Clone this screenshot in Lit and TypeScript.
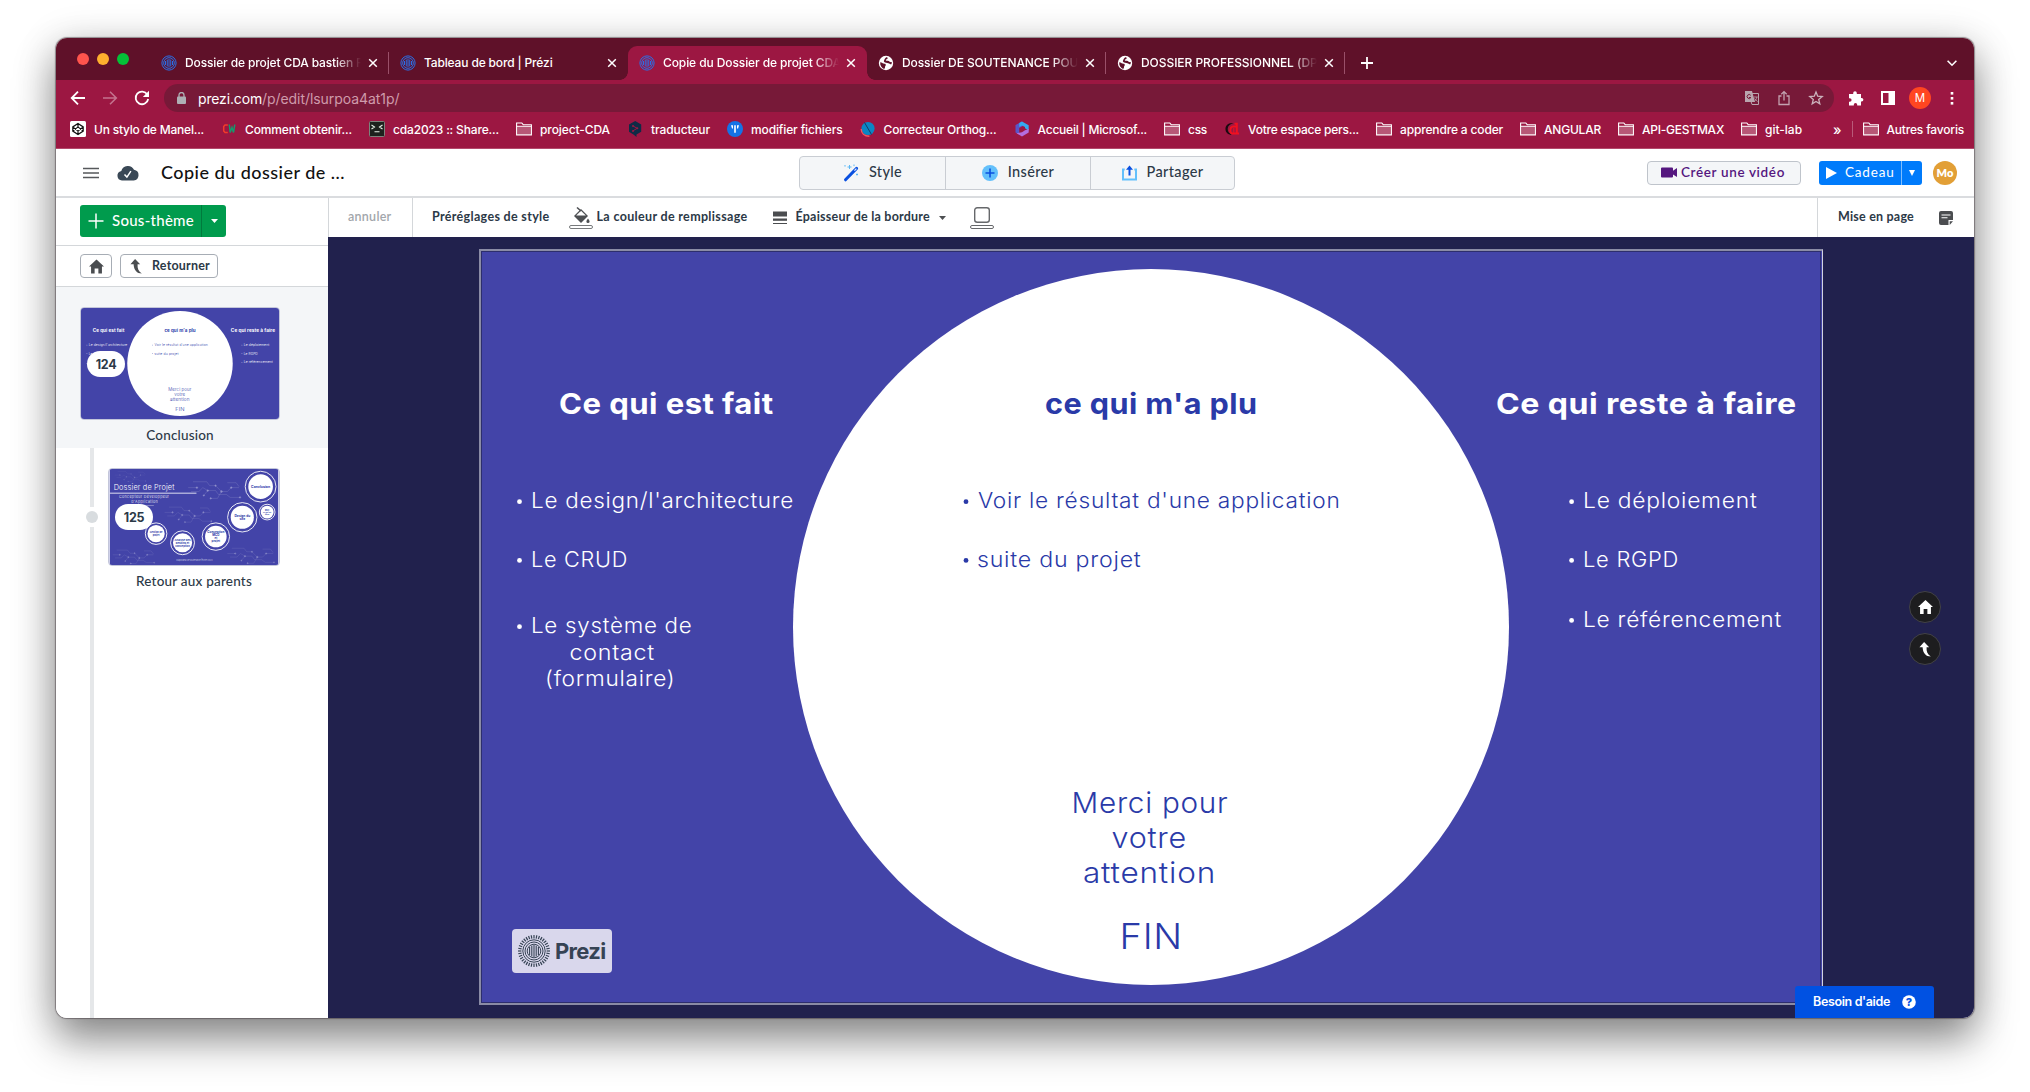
import { LitElement, html, svg, css } from "lit";
import { customElement, property } from "lit/decorators.js";

/** Label whose tracking is adjusted so that it takes up a given width. */
@customElement("fit-text")
class FitText extends LitElement {
  @property({ type: Number }) w = 0;
  @property() text = "";
  static styles = css`
    :host { display: inline-block; white-space: pre; flex: none; }
  `;
  firstUpdated() {
    const el = this.renderRoot.querySelector("span")!;
    const natural = el.getBoundingClientRect().width;
    el.style.letterSpacing = `${(this.w - natural) / this.text.length}px`;
  }
  render() {
    return html`<span>${this.text}</span>`;
  }
}

const fit = (text: string, w: number) => html`<fit-text .text=${text} .w=${w}></fit-text>`;

const preziIcon = html`<svg class="fav" width="16" height="16" viewBox="0 0 16 16" fill="none" stroke="#2a6fe6">
  <circle cx="8" cy="8" r="7.1" stroke-width="1"/><circle cx="8" cy="8" r="5.3" stroke-width="1"/>
  <path d="M4.500 6v4M6.250 4.600v6.800M8 4v8M9.750 4.600v6.800M11.500 6v4" stroke-width="1"/></svg>`;

const globeIcon = html`<svg class="fav" width="16" height="16" viewBox="0 0 16 16">
  <circle cx="8" cy="8" r="7.2" fill="#fff"/>
  <path d="M2.2 7.2c1.8 0 2 .9 3.3 1.3 1.3.3 2.3.2 2.3 1.4 0 1-.9 1.2-.8 2.2.1.8-.2 1.5-.9 1.8-2.300-.8-4.200-3.200-3.900-6.700zM8.300 2.300c1 0 1.500.4 1.300 1.100-.2.800-1.600.5-1.800 1.500-.1.700 1 .800 2.200.900 1.300.2 1.300 1.200 2.400 1.300.8.100 1.200-.1 1.400 0 0 1-.1 1.600-.4 2.200-1.500.1-1.900-.9-3.100-1.100-1.400-.3-3.100-.2-4-1.200-.8-1-.3-1.700.2-2.600.5-.8.9-1.600 1.800-2.100z" fill="#5f1129"/></svg>`;

const closeIcon = html`<svg width="10" height="10" viewBox="0 0 10 10"><path d="M1.200 1.200l7.600 7.600M8.800 1.200l-7.600 7.600" stroke="#fff" stroke-width="1.500"/></svg>`;

const folderIcon = html`<svg width="16" height="16" viewBox="0 0 16 16">
  <path d="M.6 2h5.200l1.400 1.700h8.200v10.200H.6z" fill="none" stroke="#fff" stroke-width="1.100"/>
  <path d="M1.200 5.500h13.600v7.900H1.200z" fill="#fff" fill-opacity=".28"/><path d="M.8 5.300h14.400" stroke="#fff"/></svg>`;

const icons: Record<string, unknown> = {
  folder: folderIcon,
  codepen: html`<svg width="16" height="16" viewBox="0 0 16 16"><rect width="16" height="16" rx="1.500" fill="#fff"/>
    <path d="M8 2.500l5.200 3.400v4.200L8 13.500 2.800 10.100V5.900zM8 2.500v3.400M8 10.100v3.400M2.800 5.900L8 10.100l5.200-4.200M2.800 10.100L8 5.900l5.200 4.200" fill="none" stroke="#111" stroke-width="1.200"/></svg>`,
  cw: html`<svg width="16" height="16" viewBox="0 0 16 16" fill="none" stroke-width="1.500"><path d="M6.800 4H4L2.700 5.500v4.500L4 11.500h2.800" stroke="#f23b2a"/><path d="M8.300 3.500l.9 8L11 6.500l1.500 5L13.800 3.500" stroke="#159a6d"/></svg>`,
  cda: html`<svg width="16" height="16" viewBox="0 0 16 16"><rect x=".5" y=".5" width="15" height="15" rx="1" fill="#1d211d" stroke="#7c837c"/>
    <path d="M2.500 4l3 2-3 2M13.500 4l-3 2 3 2M5.500 10.800h5" fill="none" stroke="#e8f0e8" stroke-width="1.100"/></svg>`,
  deepl: html`<svg width="16" height="16" viewBox="0 0 16 16"><path d="M8.200 0l6 3.400v7.400L9.500 13.500V16l-2.700-2.200L2 10.800V3.400z" fill="#0f2b46"/>
    <path d="M6 5l4.200 2.300L6 9.800" fill="none" stroke="#9c1742"/><circle cx="6" cy="4.900" r="1" fill="#9c1742"/><circle cx="10.300" cy="7.300" r="1" fill="#9c1742"/><circle cx="6" cy="9.900" r="1" fill="#9c1742"/></svg>`,
  pdf: html`<svg width="16" height="16" viewBox="0 0 16 16"><circle cx="8" cy="8" r="8" fill="#1473e6"/><path d="M4 4.300h2v3.200H5zM7.200 4.300h1.600v7.400H7.200zM10 4.300h2l-.9 3.200H10z" fill="#fff"/></svg>`,
  correct: html`<svg width="16" height="16" viewBox="0 0 16 16"><circle cx="8" cy="7.500" r="6.600" fill="#0a86c4"/><path d="M4.500 1.500l7 12" stroke="#143a66"/>
    <path d="M1.200 8c0 4.200 3.200 7.200 8.200 7.200" fill="none" stroke="#f2555f" stroke-width="1.400"/></svg>`,
  ms: html`<svg width="16" height="16" viewBox="0 0 16 16"><path d="M8 .5L1.500 4v7.500l3.700 2V7l5.300-3z" fill="#5a55c8"/><path d="M8 .5l6.700 3.700v5.300L11 7.300V6L8 4.500 5.200 6V2z" fill="#35a9ee"/>
    <path d="M14.700 8v3.500L8 15.500l-5.500-3.200L8 11.200l3-1.900z" fill="#b46fe0"/></svg>`,
  ca: html`<svg width="16" height="16" viewBox="0 0 16 16" fill="none"><path d="M9.500 2C4 1.300 1.200 4.500 1.500 8.500c.3 3.500 3 5.500 6.500 5.200C5 12.500 3.600 10.500 3.700 7.800 3.800 5 6 3 9.500 2z" fill="#1a0a10"/>
    <path d="M8.500 5.500C5.800 6.500 5.500 11.500 8 12.500h7M10.500 2.800h2.300v9.500M8.500 5.500h4" stroke="#f01020" stroke-width="2"/><path d="M9.800 7v5" stroke="#f01020" stroke-width="1"/></svg>`,
};

const bookmarks: [string, string, number][] = [
  ["codepen", "Un stylo de Manel...", 110], ["cw", "Comment obtenir...", 107], ["cda", "cda2023 :: Share...", 106],
  ["folder", "project-CDA", 70], ["deepl", "traducteur", 59], ["pdf", "modifier fichiers", 91.500],
  ["correct", "Correcteur Orthog...", 113], ["ms", "Accueil | Microsof...", 109.500], ["folder", "css", 19],
  ["ca", "Votre espace pers...", 111], ["folder", "apprendre a coder", 103], ["folder", "ANGULAR", 57],
  ["folder", "API-GESTMAX", 82], ["folder", "git-lab", 37],
];

const tabs: { title: string; w: number; icon: unknown; active?: boolean; fade?: boolean; sep?: boolean }[] = [
  { title: "Dossier de projet CDA bastien F", w: 178, icon: preziIcon, fade: true, sep: true },
  { title: "Tableau de bord | Prézi", w: 128.500, icon: preziIcon },
  { title: "Copie du Dossier de projet CDA", w: 178, icon: preziIcon, fade: true, active: true },
  { title: "Dossier DE SOUTENANCE POUR", w: 184, icon: globeIcon, fade: true, sep: true },
  { title: "DOSSIER PROFESSIONNEL (DP)", w: 181, icon: globeIcon, fade: true, sep: true },
];

interface Run { t: string; x: number; x2: number; y: number; s: number; blue?: boolean; bold?: boolean; dot?: number }

const runs: Run[] = [
  { t: "Ce qui est fait", x: 559, x2: 773.500, y: 413.700, s: 29, bold: true },
  { t: "Le design/l'architecture", x: 531, x2: 794, y: 508.300, s: 21.500, dot: 519.500 },
  { t: "Le CRUD", x: 531, x2: 628, y: 567, s: 21.500, dot: 519.500 },
  { t: "Le système de", x: 531, x2: 692.500, y: 633.300, s: 21.500, dot: 519.500 },
  { t: "contact", x: 569.500, x2: 655, y: 659.700, s: 21.500 },
  { t: "(formulaire)", x: 545, x2: 675.500, y: 686.300, s: 21.500 },
  { t: "ce qui m'a plu", x: 1045, x2: 1257.500, y: 413.700, s: 29, bold: true, blue: true },
  { t: "Voir le résultat d'une application", x: 978, x2: 1340.500, y: 508.300, s: 21.500, blue: true, dot: 966 },
  { t: "suite du projet", x: 977, x2: 1141.500, y: 567, s: 21.500, blue: true, dot: 966 },
  { t: "Ce qui reste à faire", x: 1496, x2: 1796.500, y: 414.300, s: 29, bold: true },
  { t: "Le déploiement", x: 1583, x2: 1757.500, y: 508.300, s: 21.500, dot: 1571.600 },
  { t: "Le RGPD", x: 1583, x2: 1679, y: 567, s: 21.500, dot: 1571.600 },
  { t: "Le référencement", x: 1583, x2: 1782, y: 627, s: 21.500, dot: 1571.600 },
  { t: "Merci pour", x: 1071.500, x2: 1228.500, y: 813, s: 28.500, blue: true },
  { t: "votre", x: 1111.500, x2: 1187, y: 848, s: 28.500, blue: true },
  { t: "attention", x: 1083, x2: 1216, y: 883, s: 28.500, blue: true },
  { t: "FIN", x: 1119.500, x2: 1183, y: 948.700, s: 35, blue: true },
];

const slide = (cls: string) => html`<svg class=${cls} viewBox="479 249 1344 756" preserveAspectRatio="none">
  <rect x="479" y="249" width="1344" height="756" fill="#4344a8"/>
  <circle cx="1151" cy="627" r="358" fill="#fff"/>
  ${runs.map((r) => svg`<g fill=${r.blue ? "#2a3aa8" : "#fff"}>
    ${r.dot ? svg`<circle cx=${r.dot} cy=${r.y - 6.600} r="2.400"/>` : ""}
    <text x=${r.x} y=${r.y} textLength=${r.x2 - r.x} lengthAdjust="spacingAndGlyphs" letter-spacing=${r.bold ? 0.4 : 0.7} font-size=${r.s} font-weight=${r.bold ? 700 : 300}>${r.t}</text></g>`)}
</svg>`;

const bubbles: { x: number; y: number; R: number; r: number; lines: string[] }[] = [
  { x: 154, y: 18, R: 15.700, r: 12.600, lines: ["Conclusion"] },
  { x: 160.700, y: 44, R: 8, r: 6.600, lines: ["MVC", "ce qu'est", "donc"] },
  { x: 135.300, y: 49.300, R: 15, r: 11.800, lines: ["Design du", "site"] },
  { x: 108.300, y: 69, R: 14, r: 11, lines: ["Conception", "MCD", "et", "projet"] },
  { x: 74.300, y: 75.300, R: 12.200, r: 9.800, lines: ["Analyse des", "besoins et", "conception"] },
  { x: 47.300, y: 66, R: 11, r: 8.800, lines: ["Gestion de", "projet"] },
];

const circuit = (x: number, y: number, s: number, o: number) => svg`<g transform="translate(${x} ${y}) scale(${s})" stroke="#fff" stroke-opacity=${o} fill="#fff" fill-opacity=${o} stroke-width=".4">
  <path d="M0 7h9M3 11h8l4-4M5 1h14l3 4h6M15 7l5 3h8l3 4M20 10l-4 5M28 5l6 6h6l4-4h8M31 14h8l4 3h10M34 11l-4 7h-7M40 2h9l3 4" fill="none"/>
  <circle cx="9" cy="7" r=".9"/><circle cx="20" cy="10" r=".9"/><circle cx="16" cy="15" r=".8"/><circle cx="34" cy="11" r="1"/><circle cx="23" cy="18" r=".8"/><circle cx="44" cy="7" r=".9"/><circle cx="53" cy="17" r=".8"/><circle cx="28" cy="5" r=".8"/></g>`;

const homeShape = svg`<path d="M8 .5L16 8h-2.200v7.500H10V10H6v5.500H2.200V8H0z"/>`;
const backShape = svg`<path d="M5.500 0L11 5.500H8.200c-.3 4.500 1 7.800 4.600 10C7.500 15.500 4.200 12 3.900 5.500H.5z"/>`;

@customElement("app-root")
class AppRoot extends LitElement {
  static styles = css`
    :host { display: block; width: 2030px; height: 1092px; overflow: hidden; background: #fff; box-sizing: border-box; padding: 38px 56px 0;
      font-family: Inter, "Liberation Sans", sans-serif; }
    * { box-sizing: border-box; }
    svg { display: block; flex: none; }
    .window { width: 1918px; height: 980px; border-radius: 11px; display: flex; flex-direction: column;
      box-shadow: 0 0 1px 1px rgba(60, 50, 55, .5), 0 22px 42px rgba(0, 0, 0, .42), 0 4px 40px rgba(0, 0, 0, .16); }
    .tabstrip { height: 42px; background: #5f1129; border-radius: 11px 11px 0 0; display: flex; padding-left: 21px; color: #fff; }
    .lights { display: flex; gap: 8px; margin-top: 15px; width: 73px; height: 12px; }
    .light { width: 12px; height: 12px; border-radius: 50%; }
    .red { background: #ff544d; } .yellow { background: #ffb02e; } .green { background: #05c138; }
    .tab { width: 239px; height: 34px; margin-top: 8px; display: flex; align-items: center; padding-left: 11px; padding-bottom: 1px; position: relative; font-size: 12px; font-weight: 500; }
    .tab .name { width: 178px; margin-left: 8px; }
    .tab .fade { -webkit-mask-image: linear-gradient(90deg, #000 150px, transparent 176px); mask-image: linear-gradient(90deg, #000 150px, transparent 176px); }
    .tab svg:last-of-type { margin-left: 5px; }
    .tab.sep { border-right: 1px solid transparent; border-image: linear-gradient(transparent 7px, #9a5069 7px, #9a5069 27px, transparent 27px) 1; }
    .tab.active { background: #9c1742; border-radius: 9px 9px 0 0; }
    .tab.active::before, .tab.active::after { content: ""; position: absolute; bottom: 0; width: 8px; height: 8px; }
    .tab.active::before { left: -8px; background: radial-gradient(circle at 0 0, transparent 7.500px, #9c1742 8px); }
    .tab.active::after { right: -8px; background: radial-gradient(circle at 100% 0, transparent 7.500px, #9c1742 8px); }
    .plus { margin: 19px 0 0 16px; } .chev { margin: 20px 17px 0 auto; }
    .toolbar { height: 36px; background: #9c1742; display: flex; align-items: center; padding-left: 14px; }
    .nav { display: flex; gap: 16px; width: 94px; }
    .omni { width: 1670px; height: 28px; border-radius: 14px; background: #771938; display: flex; align-items: center; padding: 0 10px 0 13px; color: #cf9bab; font-size: 14px; }
    .omni .host { color: #fff; margin-left: 12px; }
    .omni .acts { margin-left: auto; display: flex; gap: 16px; align-items: center; }
    .ext { display: flex; align-items: center; gap: 16px; margin-left: 14px; }
    .who { width: 22px; height: 22px; border-radius: 50%; background: #ff4621; color: #fff; font-size: 11.500px; display: grid; place-items: center; margin: 0 -3px; }
    .marks { height: 33px; background: #9c1742; border-bottom: 1px solid #b34a6c; display: flex; padding: 0 10px 6px 14px; align-items: center; color: #fff; font-size: 12px; font-weight: 500; gap: 17px; }
    .mark { display: flex; align-items: center; gap: 8px; }
    .more { margin-left: auto; display: flex; align-items: center; gap: 10px; font-size: 14px; }
    .vsep { width: 1px; height: 16px; background: #b95a79; }
    .more .mark { font-size: 12px; }

    .app { flex: 1; display: flex; flex-direction: column; background: #fff; border-radius: 0 0 11px 11px; overflow: hidden; font-family: Lato, "Open Sans", sans-serif; color: #2c3947; min-height: 0; }
    .head { height: 49px; border-bottom: 2px solid #dadcdf; display: grid; grid-template-columns: 743px 436px 1fr; align-items: center; flex: none; }
    .head fit-text, .bar fit-text, .btn fit-text, .addbtn fit-text { padding-bottom: 2px; }
    .left { display: flex; align-items: center; padding-left: 27px; }
    .doc { margin-left: 22px; font-size: 18px; font-weight: 500; color: #111; }
    .cloud { margin-left: 18px; }
    .segs { display: grid; grid-template-columns: 145px 145px 144px; height: 34px; border: 1px solid #c9cdd3; border-radius: 4px; background: #f4f6f8; font-size: 14.500px; font-weight: 500; }
    .seg { display: flex; align-items: center; justify-content: center; gap: 10px; }
    .seg + .seg { border-left: 1px solid #c9cdd3; }
    .right { display: flex; align-items: center; justify-content: flex-end; padding-right: 17px; }
    .video { width: 154px; height: 24px; border: 1px solid #bfc4cb; border-radius: 4px; background: #f4f6f8; color: #55177f; display: flex; align-items: center; padding-left: 13px; gap: 4px; font-size: 13.500px; font-weight: 600; }
    .gift { width: 103px; height: 24px; background: #007bfb; border-radius: 3px; color: #fff; display: flex; align-items: center; margin: 0 11px 0 18px; font-size: 13.500px; font-weight: 400; }
    .gift .play { margin: 0 8px 0 7px; }
    .gift .drop { width: 21px; height: 24px; border-left: 1px solid #80bdfd; margin-left: auto; display: grid; place-items: center; }
    .mo { width: 24px; height: 24px; border-radius: 50%; background: #e29f36; color: #fff; font-weight: 800; font-size: 11px; display: grid; place-items: center; }
    .body { flex: 1; display: grid; grid-template-columns: 272px 1fr; min-height: 0; }
    .side { display: flex; flex-direction: column; min-height: 0; }
    .add { height: 48px; border-bottom: 1px solid #d4d7da; padding: 7px 24px; }
    .addbtn { width: 146px; height: 32px; border-radius: 3px; background: #009b4d; color: #fff; display: flex; align-items: center; font-size: 15px; font-weight: 500; padding-left: 8px; }
    .addbtn .cross { margin-right: 8px; }
    .addbtn .drop { width: 25px; height: 32px; border-left: 1px solid #007a3d; margin-left: auto; display: grid; place-items: center; }
    .path { height: 41px; border-bottom: 1px solid #d4d7da; padding: 8px 24px; display: flex; gap: 8px; }
    .btn { height: 24px; border: 1px solid #a7adb5; border-radius: 4px; display: flex; align-items: center; font-size: 12.500px; font-weight: 700; }
    .home { width: 32px; justify-content: center; } .back { width: 98px; padding-left: 9px; gap: 10px; }
    .cur { height: 161px; background: #f4f6f8; padding: 20px 0 0 24px; }
    .wrap { position: relative; width: 200px; }
    .thumb { width: 200px; height: 113px; border-radius: 4px; border: 1px solid #c3c6da; font-family: Inter, sans-serif; }
    .pill { position: absolute; left: 7px; top: 44px; width: 38px; height: 26px; border-radius: 13px; background: #fff; display: grid; place-items: center; font: 700 12.500px Inter, sans-serif; }
    .cap { font-size: 13.500px; font-weight: 500; text-align: center; margin-top: 7px; line-height: 16px; }
    .next { flex: 1; display: flex; }
    .track { width: 12px; margin-left: 30px; display: flex; flex-direction: column; align-items: center; }
    .seg1 { width: 4px; height: 59px; background: #e5e7e9; } .dot { width: 12px; height: 12px; border-radius: 50%; background: #d8dcdf; margin: 4px 0; } .seg2 { width: 4px; flex: 1; background: #e5e7e9; }
    .kid { padding: 20px 0 0 10px; } .kid .wrap { width: 172px; } .kid .thumb { width: 172px; height: 98px; } .kid .pill { top: 36px; }
    .main { display: flex; flex-direction: column; min-width: 0; }
    .bar { height: 39px; display: flex; align-items: center; font-size: 12.500px; font-weight: 700; border-left: 1px solid #d4d7da; }
    .undo { width: 84px; height: 39px; border-right: 1px solid #d4d7da; display: flex; align-items: center; padding-left: 19px; color: #a2a6ab; font-weight: 600; }
    .preset { margin-left: 19px; } .bucket { margin: 0 4px 0 19px; } .lines { margin: 0 9px 0 25px; } .caret { margin-left: 9px; } .shape { margin-left: 24px; }
    .layout { margin-left: auto; width: 157px; height: 39px; border-left: 1px solid #d4d7da; display: flex; align-items: center; padding-left: 20px; gap: 25px; }
    .stage { flex: 1; background: #21214d; padding-top: 12px; display: flex; justify-content: center; position: relative; min-height: 0; }
    .frame { width: 1344px; height: 756px; border: 2px solid #8a8ba5; border-right: 1.500px solid #d2d3e0; outline: 1px solid #2d2e6d; outline-offset: -3px; background: #4344a8; position: relative; }
    .slide { width: 1344px; height: 756px; margin: -2px; clip-path: inset(3px); font-family: Inter, sans-serif; }
    .logo { position: absolute; left: 31px; top: 678px; width: 100px; height: 44px; border-radius: 4px; background: #d9d7ec; display: flex; align-items: center; gap: 4px; padding-left: 5px; font: 700 22px Inter, sans-serif; color: #364354; }
    .float { position: absolute; right: 33px; top: 354px; display: flex; flex-direction: column; gap: 10px; }
    .round { width: 32px; height: 32px; border-radius: 50%; background: #1d1d1f; border: 1px solid #424247; display: grid; place-items: center; }
    .help { position: absolute; right: 40px; bottom: 0; width: 139px; height: 32px; background: #0051e2; color: #fff; border-radius: 3px 3px 0 0; display: flex; align-items: center; padding: 0 0 1px 18px; gap: 12px; font: 600 12.500px Inter, sans-serif; }
  `;

  private chrome() {
    return html`
      <div class="tabstrip">
        <div class="lights"><i class="light red"></i><i class="light yellow"></i><i class="light green"></i></div>
        ${tabs.map((t) => html`<div class="tab ${t.active ? "active" : ""} ${t.sep ? "sep" : ""}">
          ${t.icon}<div class="name ${t.fade ? "fade" : ""}">${fit(t.title, t.w)}</div>${closeIcon}</div>`)}
        <svg class="plus" width="12" height="12" viewBox="0 0 12 12"><path d="M6 0v12M0 6h12" stroke="#fff" stroke-width="1.800"/></svg>
        <svg class="chev" width="10" height="10" viewBox="0 0 10 10"><path d="M.6 2.800L5 7.200l4.400-4.400" fill="none" stroke="#fff" stroke-width="1.600"/></svg>
      </div>
      <div class="toolbar">
        <div class="nav">
          <svg width="16" height="16" viewBox="0 0 16 16"><path d="M15 8H2M8 1.700L1.700 8 8 14.300" fill="none" stroke="#fff" stroke-width="1.800"/></svg>
          <svg width="16" height="16" viewBox="0 0 16 16"><path d="M1 8h13M8 1.700L14.300 8 8 14.300" fill="none" stroke="#c4738e" stroke-width="1.600"/></svg>
          <svg width="16" height="16" viewBox="0 0 16 16"><path d="M13.300 4.500A6.300 6.300 0 1 0 14.200 9" fill="none" stroke="#fff" stroke-width="1.800"/><path d="M15 .8V7H8.800z" fill="#fff"/></svg>
        </div>
        <div class="omni">
          <svg width="9" height="12" viewBox="0 0 9 12"><rect y="4.500" width="9" height="7.500" rx="1" fill="#aeb0b5"/><path d="M2 5V3a2.500 2.500 0 0 1 5 0v2" fill="none" stroke="#aeb0b5" stroke-width="1.300"/></svg>
          <span class="host">${fit("prezi.com", 64)}</span>${fit("/p/edit/lsurpoa4at1p/", 137.500)}
          <div class="acts">
            <svg width="16" height="16" viewBox="0 0 16 16"><path d="M1 1h7l3 11H1z" fill="#b9a5ae"/><path d="M8 3.500h6.500v11H8l-1-3" fill="none" stroke="#b9a5ae"/><path d="M6.700 5.300a2 2 0 1 0 .2 2.200H5" fill="none" stroke="#771938" stroke-width="1"/><path d="M9.700 7h4M12.800 7c-.3 2-1.400 3.500-2.500 4.500M10.500 8.500l3 3.200" fill="none" stroke="#b9a5ae" stroke-width=".8"/></svg>
            <svg width="16" height="16" viewBox="0 0 16 16" fill="none" stroke="#c3a3b0" stroke-width="1.300"><path d="M5.500 6H3v8.500h10V6h-2.500M8 10.500V2M5.300 4.300L8 1.600l2.700 2.700"/></svg>
            <svg width="16" height="16" viewBox="0 0 16 16"><path d="M8 2l1.700 4.200 4.500.3-3.500 2.900 1.100 4.400L8 11.400l-3.800 2.400 1.100-4.400L1.800 6.500l4.500-.3z" fill="none" stroke="#cbb3bc" stroke-width="1.300"/></svg>
          </div>
        </div>
        <div class="ext">
          <svg width="16" height="16" viewBox="0 0 16 16"><path d="M1 4h4.200V3a1.800 1.800 0 0 1 3.600 0v1H13v4h.6a1.800 1.800 0 0 1 0 3.600H13v4H9.200v-.8a1.700 1.700 0 0 0-3.400 0v.8H1v-3.800h.8a1.800 1.800 0 0 0 0-3.600H1z" fill="#fff"/></svg>
          <svg width="16" height="16" viewBox="0 0 16 16"><path d="M1 1h14v14H1zM3 3v10h5.500V3z" fill="#fff" fill-rule="evenodd"/></svg>
          <div class="who">M</div>
          <svg width="16" height="16" viewBox="0 0 16 16" fill="#fff"><rect x="6.700" y="2" width="2.600" height="2.600"/><rect x="6.700" y="7" width="2.600" height="2.600"/><rect x="6.700" y="12" width="2.600" height="2.600"/></svg>
        </div>
      </div>
      <div class="marks">
        ${bookmarks.map(([i, t, w]) => html`<div class="mark">${icons[i]}${fit(t, w)}</div>`)}
        <div class="more"><span>»</span><i class="vsep"></i><div class="mark">${folderIcon}${fit("Autres favoris", 77.500)}</div></div>
      </div>`;
  }

  private header() {
    return html`<div class="head">
      <div class="left">
        <svg width="16" height="12" viewBox="0 0 16 12"><path d="M0 1.500h16M0 6h16M0 10.500h16" stroke="#56585b" stroke-width="1.500"/></svg>
        <svg class="cloud" width="22" height="16" viewBox="0 0 22 16"><path d="M5 15.500A4.800 4.800 0 0 1 4.300 6 6.800 6.800 0 0 1 17 4.800a5.400 5.400 0 0 1-.3 10.700z" fill="#3a4856"/><path d="M7.500 9.500l2.400 2.600 4-6" fill="none" stroke="#fff" stroke-width="1.500"/></svg>
        <span class="doc">${fit("Copie du dossier de ...", 184)}</span>
      </div>
      <div class="segs">
        <div class="seg"><svg width="16" height="18" viewBox="0 0 16 18"><path d="M2.500 15.800L13.600 4.400" stroke="#0a50e0" stroke-width="3" stroke-linecap="round"/><path d="M11.400 6.600l2-2" stroke="#dce8ff" stroke-width="1.300"/><path d="M6.500 1v4M4.500 3h4M2 1v1.600M11 .5v1.600M14 9.500v2M13 10.500h2" stroke="#5cb8f5" stroke-width="1"/></svg>${fit("Style", 33)}</div>
        <div class="seg"><svg width="16" height="16" viewBox="0 0 16 16"><circle cx="8" cy="8" r="8" fill="#63c0fb"/><path d="M8 3.500v9M3.500 8h9" stroke="#0a50e0" stroke-width="1.600"/></svg>${fit("Insérer", 46.500)}</div>
        <div class="seg"><svg width="15" height="16" viewBox="0 0 15 16"><path d="M2.700 4.500H1v10h13v-10h-1.700" fill="none" stroke="#63c0fb" stroke-width="2"/><path d="M7.500 10.500V3" stroke="#0a50e0" stroke-width="2"/><path d="M4 4.700L7.500.5 11 4.700z" fill="#0a50e0"/></svg>${fit("Partager", 57)}</div>
      </div>
      <div class="right">
        <div class="video"><svg width="16" height="11" viewBox="0 0 16 11"><path d="M1 .5h10q1 0 1 1v2.300L16 1v9l-4-2.500v2q0 1-1 1H1q-1 0-1-1v-8q0-1 1-1z" fill="#55177f"/></svg>${fit("Créer une vidéo", 104)}</div>
        <div class="gift"><svg class="play" width="11" height="12" viewBox="0 0 11 12"><path d="M0 0l11 6-11 6z" fill="#fff"/></svg>${fit("Cadeau", 49.500)}
          <div class="drop"><svg width="6" height="6" viewBox="0 0 6 6"><path d="M0 0h6L3 6z" fill="#fff"/></svg></div></div>
        <div class="mo">Mo</div>
      </div>
    </div>`;
  }

  private side() {
    return html`<div class="side">
      <div class="add"><div class="addbtn"><svg class="cross" width="16" height="16" viewBox="0 0 16 16"><path d="M8 .5v15M.5 8h15" stroke="#fff" stroke-width="1.500"/></svg>${fit("Sous-thème", 82)}
        <div class="drop"><svg width="7" height="4" viewBox="0 0 7 4"><path d="M0 0h7L3.500 4z" fill="#fff"/></svg></div></div></div>
      <div class="path">
        <div class="btn home"><svg width="15" height="15" viewBox="0 0 16 16" fill="#4a4d50">${homeShape}</svg></div>
        <div class="btn back"><svg width="12" height="15" viewBox="0 0 13 16" fill="#4a4d50">${backShape}</svg>${fit("Retourner", 58)}</div>
      </div>
      <div class="cur">
        <div class="wrap">${slide("thumb")}<div class="pill">${fit("124", 20.500)}</div><div class="cap">${fit("Conclusion", 67.500)}</div></div>
      </div>
      <div class="next">
        <div class="track"><i class="seg1"></i><i class="dot"></i><i class="seg2"></i></div>
        <div class="kid"><div class="wrap">
          <svg class="thumb" viewBox="0 0 172 98" fill="#fff">
            <rect width="172" height="98" fill="#4344a8"/>
            ${circuit(5, 2, .6, .18)}${circuit(80, 12, 1, .3)}${circuit(56, 38, .9, .25)}${circuit(3, 82, .8, .25)}${circuit(120, 80, .9, .25)}
            <text x="4" y="21.500" font-size="7.500" font-weight="300" textLength="62">Dossier de Projet</text>
            <path d="M0 24.800h88.500" stroke="#fff" stroke-opacity=".55" stroke-width="1.600"/>
            <text x="9.500" y="29.500" font-size="3.800" fill-opacity=".8" textLength="51">Concepteur Développeur</text>
            <text x="22" y="34.500" font-size="3.800" fill-opacity=".8" textLength="27">d'Application</text>
            <path d="M32 37.300h13" stroke="#fff" stroke-opacity=".5" stroke-width=".7"/>
            <text x="86.500" y="94" font-size="2.200" fill-opacity=".6" text-anchor="middle" textLength="37">Diaporama de soutenance février 2023</text>
            ${bubbles.map((b) => svg`<circle cx=${b.x} cy=${b.y} r=${b.R} fill="#4344a8" stroke="#fff" stroke-width=".9"/><circle cx=${b.x} cy=${b.y} r=${b.r}/>
              ${b.lines.map((l, i) => svg`<text x=${b.x} y=${b.y + 1 + (i - (b.lines.length - 1) / 2) * b.r * .29} font-size=${b.r * .28} font-weight="700" fill="#2a3aa8" text-anchor="middle">${l}</text>`)}`)}
          </svg><div class="pill">${fit("125", 20.500)}</div><div class="cap">${fit("Retour aux parents", 116)}</div></div></div>
      </div>
    </div>`;
  }

  private main() {
    const ticks = Array.from({ length: 36 }, (_, i) => i * 10);
    return html`<div class="main">
      <div class="bar">
        <div class="undo">${fit("annuler", 43.500)}</div>
        <div class="preset">${fit("Préréglages de style", 117.500)}</div>
        <svg class="bucket" width="24" height="24" viewBox="0 0 24 24"><path d="M5 10l7-7 7 7-7 7z" fill="#4d4f52"/><path d="M12 4.800L7.200 9.500h9.600z" fill="#fff"/><path d="M8 1.500l4 3.500" stroke="#4d4f52" stroke-width="1.600"/><path d="M19 12.500c1 1.500 1.600 2.300 1.600 3a1.600 1.600 0 0 1-3.200 0c0-.7.600-1.500 1.600-3z" fill="#4d4f52"/><rect x=".5" y="19.500" width="23" height="3" rx="1.500" fill="#fff" stroke="#77797c"/></svg>
        ${fit("La couleur de remplissage", 151)}
        <svg class="lines" width="14" height="14" viewBox="0 0 14 14" fill="#4a4c4f"><rect y=".5" width="14" height="5"/><rect y="7.500" width="14" height="2.300"/><rect y="12" width="14" height="1"/></svg>
        ${fit("Épaisseur de la bordure", 134.500)}
        <svg class="caret" width="7" height="4" viewBox="0 0 7 4"><path d="M0 0h7L3.500 4z" fill="#4d4f52"/></svg>
        <svg class="shape" width="24" height="24" viewBox="0 0 24 24" fill="#fff" stroke="#66686b"><rect x="4.700" y="1.700" width="14.600" height="14.600" rx="2.500" stroke-width="1.400"/><rect x=".5" y="19.500" width="23" height="3" rx="1.500"/></svg>
        <div class="layout">${fit("Mise en page", 76)}<svg width="14" height="14" viewBox="0 0 14 14"><path d="M2 0h10q2 0 2 2v7H9.500v5H2q-2 0-2-2V2q0-2 2-2z" fill="#4b4d50"/><path d="M10.700 10.200H14L10.700 14z" fill="#4b4d50"/><path d="M2.500 4h9M2.500 6.700h6" stroke="#fff" stroke-width="1.100"/></svg></div>
      </div>
      <div class="stage">
        <div class="frame">${slide("slide")}
          <div class="logo"><svg width="34" height="34" viewBox="-17 -17 34 34" fill="none" stroke="#364354">
            ${ticks.map((a) => svg`<path d="M0 -16v3.400" transform="rotate(${a})" stroke-width="1.200"/>`)}
            <circle r="11.200"/><circle r="9"/><circle r="6.800"/><path d="M-4.400 -4v8M-2.200 -5.500v11M0 -6v12M2.200 -5.500v11M4.400 -4v8" stroke-width="1.100"/></svg>${fit("Prezi", 50.500)}</div>
        </div>
        <div class="float">
          <div class="round"><svg width="15" height="16" viewBox="0 0 16 16" fill="#fff">${homeShape}</svg></div>
          <div class="round"><svg width="12" height="15" viewBox="0 0 13 16" fill="#fff">${backShape}</svg></div>
        </div>
        <div class="help">${fit("Besoin d'aide", 77)}<svg width="14" height="14" viewBox="0 0 14 14"><circle cx="7" cy="7" r="6.800" fill="#fff"/><text x="7" y="11" text-anchor="middle" font-size="11" font-weight="800" fill="#0051e2">?</text></svg></div>
      </div>
    </div>`;
  }

  render() {
    return html`<div class="window">${this.chrome()}
      <div class="app">${this.header()}<div class="body">${this.side()}${this.main()}</div></div>
    </div>`;
  }
}
